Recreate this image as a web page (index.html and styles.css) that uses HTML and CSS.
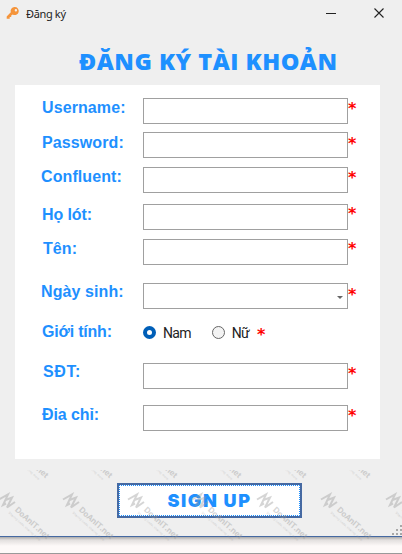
FILE: index.html
```html
<!DOCTYPE html>
<html lang="vi">
<head>
<meta charset="utf-8">
<title>Đăng ký</title>
<link rel="stylesheet" href="styles.css">
</head>
<body>
<main class="window">
  <header class="titlebar">
    <svg class="key" width="14" height="14" viewBox="0 0 14 14"><path fill="#f5943a" fill-rule="evenodd" d="M8.5 1a4 4 0 0 0-3.7 5.3L.7 10.5v2.2h3v-1.6h1.5V9.6l1.5-1.2A4 4 0 1 0 8.5 1zm1.4 2a1.2 1.2 0 1 1 0 2.400a1.2 1.2 0 0 1 0-2.400z"/></svg>
    <span class="caption">Đăng ký</span>
    <svg class="controls" width="60" height="12" viewBox="0 0 60 12"><path d="M0 6.500h10M48.500 1.500l9 9m0-9l-9 9" fill="none" stroke="#222" stroke-width="1.1"/></svg>
  </header>
  <h1 class="title">ĐĂNG KÝ TÀI KHOẢN</h1>
  <form class="card">
    <div class="row username"><label>Username:</label><input type="text"><b class="star">*</b></div>
    <div class="row password"><label>Password:</label><input type="text"><b class="star">*</b></div>
    <div class="row confluent"><label>Confluent:</label><input type="text"><b class="star">*</b></div>
    <div class="row surname"><label>Họ lót:</label><input type="text"><b class="star">*</b></div>
    <div class="row name"><label>Tên:</label><input type="text"><b class="star">*</b></div>
    <div class="row birthday"><label>Ngày sinh:</label><div class="picker"><svg width="6" height="3" viewBox="0 0 6 3"><path d="M0 0h6L3 3z" fill="#666"/></svg></div><b class="star">*</b></div>
    <div class="row gender"><label>Giới tính:</label><div class="options"><i class="radio checked"></i><span class="male">Nam</span><i class="radio"></i><span class="female">Nữ</span><b class="star">*</b></div></div>
    <div class="row phone"><label>SĐT:</label><input type="text"><b class="star">*</b></div>
    <div class="row address"><label>Đia chỉ:</label><input type="text"><b class="star">*</b></div>
  </form>
  <button class="submit" type="button"><span>SIGN UP</span></button>
  <svg class="grip" width="11" height="11" viewBox="0 0 11 11"><path fill="#a8a8a8" d="M8 0h2v2H8zM4 4h2v2H4zM8 4h2v2H8zM0 8h2v2H0zM4 8h2v2H4zM8 8h2v2H8z"/></svg>
</main>
<footer class="edge"></footer>
<svg class="watermark" width="402" height="84" viewBox="0 470 402 84">
  <defs>
    <g id="mark">
      <path d="M0 499.500L9 494.500L4 505L7 503.500M6.500 500L13 497.500L8 507.500L16 502" class="logo"/>
      <g transform="translate(7 499) rotate(42)">
        <text x="14" y="3" class="brand" textLength="43">DoAnIT.net</text>
        <text x="11" y="9" class="tagline" textLength="42">Sharing code, sharing more</text>
      </g>
    </g>
    <g id="line">
      <use href="#mark" x="-1"/><use href="#mark" x="63"/><use href="#mark" x="128"/><use href="#mark" x="192"/><use href="#mark" x="257"/><use href="#mark" x="321"/><use href="#mark" x="386"/>
    </g>
  </defs>
  <use href="#line"/>
  <use href="#line" x="-1" y="-61"/>
</svg>
</body>
</html>
```
FILE: styles.css
```css
* { box-sizing: border-box; }
body {
  margin: 0;
  width: 402px;
  height: 554px;
  overflow: hidden;
  position: relative;
  background: #fdf9f8;
  font-family: "Liberation Sans", sans-serif;
}
.window {
  position: relative;
  height: 537px;
  background: #efefef;
  border-bottom: 1px solid #4569a2;
}
.titlebar {
  display: flex;
  height: 26px;
  padding: 0 16px 0 6px;
  align-items: center;
}
.caption {
  margin-left: 6px;
  font: 11px "Noto Sans", sans-serif;
  letter-spacing: -.35px;
  color: #222;
}
.controls { margin-left: auto; }
.title {
  margin: 18px 0 0 79px;
  font: 800 23.500px/34px "Open Sans", sans-serif;
  letter-spacing: .5px;
  white-space: nowrap;
  color: #1e90ff;
}
.card {
  width: 365px;
  height: 374px;
  margin: 7px 0 0 15px;
  padding: 13px 0 0 26px;
  background: #fff;
}
.row {
  display: grid;
  grid-template-columns: 102px 205px 20px;
  height: 26px;
}
.row label {
  padding: 1px 0 0 1px;
  font-size: 16px;
  line-height: 18px;
  font-weight: bold;
  letter-spacing: .1px;
  color: #1e90ff;
  white-space: nowrap;
}
.password { margin-top: 8px; }
.confluent { margin-top: 9px; }
.surname { margin-top: 11px; }
.name { margin-top: 9px; }
.birthday { margin-top: 18px; }
.gender { margin-top: 14px; }
.phone { margin-top: 14px; }
.address { margin-top: 16px; }
.row.password label, .row.surname label { padding-top: 2px; }
.row.confluent label, .row.birthday label { padding-left: 0; }
.row.birthday label { padding-top: 0; }
.row.gender label { padding-top: 0; letter-spacing: -.2px; }
.row.name label, .row.phone label { padding-left: 2px; }
.row.phone label { letter-spacing: .6px; padding-top: 0; }
.row.surname label, .row.address label { letter-spacing: -.1px; }
input, .picker {
  width: 205px;
  height: 26px;
  padding: 0;
  background: #fff;
  border: 1px solid #a0a0a0;
  border-radius: 0;
}
.picker {
  display: flex;
  align-items: center;
  justify-content: flex-end;
  padding: 2px 4px 0 0;
}
.star {
  font: bold 16px/21px "DejaVu Sans", sans-serif;
  color: #f00;
}
.row.password .star, .row.birthday .star { line-height: 24px; }
.row.surname .star, .row.name .star { line-height: 19px; }
.options {
  display: flex;
  height: 18px;
  align-items: center;
  font: 14px/18px Roboto, sans-serif;
  color: #222;
}
.row.gender .star { padding-top: 4px; }
.radio {
  width: 13px;
  height: 13px;
  border: 1px solid #666;
  border-radius: 50%;
  background: #f3f3f3;
}
.radio.checked {
  border: 4px solid #005fb8;
  background: #fff;
}
.options span { letter-spacing: -.7px; }
.male { margin: 2px 21px 0 7px; }
.female { margin: 2px 8px 0 7px; }
.submit {
  display: block;
  width: 185px;
  height: 35px;
  margin: 24px 0 0 117px;
  padding: 0;
  border: 2px solid #4569a2;
  background: #fff;
  color: #1e90ff;
  font: 900 18px/29px Inter, sans-serif;
  letter-spacing: 1.600px;
}
.submit span {
  display: block;
  height: 31px;
  border: 1px dotted #1e90ff;
}
.grip {
  position: absolute;
  right: -1px;
  bottom: 0;
}
.edge {
  height: 17px;
  background: linear-gradient(#aaa, #e2dfde 3px, #fdf9f8 9px);
  border-bottom: 1px solid #999;
}
.watermark {
  position: absolute;
  left: 0;
  bottom: 0;
  opacity: .4;
}
.logo {
  fill: none;
  stroke: #999;
  stroke-width: 2;
}
.brand {
  font: bold 8px Inter, sans-serif;
  fill: #999;
}
.tagline {
  font: 3px Inter, sans-serif;
  fill: #999;
}
```
